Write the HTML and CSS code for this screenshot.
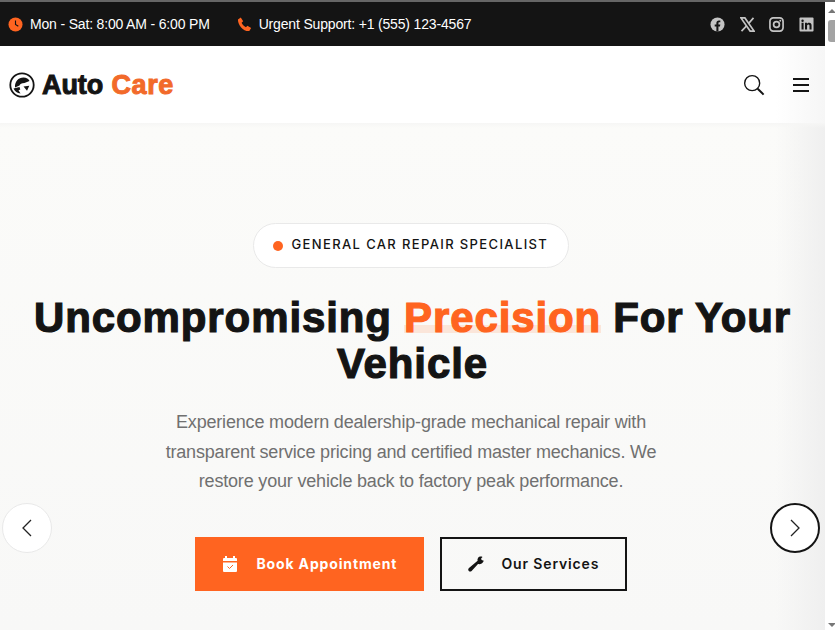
FILE: index.html
```html
<!DOCTYPE html>
<html lang="en">
<head>
    <meta charset="UTF-8">
    <meta name="viewport" content="width=device-width, initial-scale=1.0">
    <title>Auto Care</title>
    <link rel="stylesheet" href="styles.css">
</head>
<body>
    <div class="window">
        <div class="page">
            <div class="topbar">
                <div class="topbar-info">
                    <span class="info-item">
                        <svg class="info-icon" viewBox="0 0 16 16"><circle cx="8" cy="8" r="7.5" fill="#ff6420"/><path d="M8 3.600V8l3 1.800" fill="none" stroke="#141414" stroke-width="1.200"/></svg>
                        Mon - Sat: 8:00 AM - 6:00 PM
                    </span>
                    <span class="info-item">
                        <svg class="info-icon" viewBox="0 0 16 16"><path d="M1 2.600 4 .6l2.600 4-1.700 1.500c.8 2 2.400 3.700 4.600 4.700l1.600-1.600 4 2.600-2 3.200C7 15.600 1 9 1 2.600z" fill="#ff6420"/></svg>
                        Urgent Support: +1 (555) 123-4567
                    </span>
                </div>
                <div class="socials">
                    <svg class="social" viewBox="0 0 16 16"><circle cx="8" cy="8" r="7.500" fill="#c4c4c4"/><path d="M6.800 15.500V10H5V8h1.800V6.500C6.800 4.700 7.900 3.700 9.500 3.700l1.500.1v1.800h-1C9.200 5.600 9 6 9 6.700V8h2l-.4 2H9v5.500z" fill="#141414"/></svg>
                    <svg class="social" viewBox="0 0 16 16"><path d="M1 1h4.200l9.800 14h-4.200z" fill="none" stroke="#c4c4c4" stroke-width="1.800"/><path d="M14.400 1 9 7M7 9.500 1.600 15" stroke="#c4c4c4" stroke-width="1.800" fill="none"/></svg>
                    <svg class="social" viewBox="0 0 16 16"><rect x="1" y="1" width="14" height="14" rx="3.500" fill="none" stroke="#c4c4c4" stroke-width="1.800"/><circle cx="8" cy="8" r="3.100" fill="none" stroke="#c4c4c4" stroke-width="1.800"/><circle cx="12" cy="4" r="1" fill="#c4c4c4"/></svg>
                    <svg class="social" viewBox="0 0 16 16"><rect x=".5" y=".5" width="15" height="15" rx="1" fill="#c4c4c4"/><path d="M2.700 6.200h2.200v7H2.700zM3.800 2.700a1.300 1.300 0 1 1 0 2.600 1.300 1.300 0 0 1 0-2.600zM6.400 6.200h2.100v1c.4-.7 1.200-1.200 2.300-1.200 2.200 0 2.600 1.400 2.600 3.300v3.900h-2.200V9.700c0-.9-.1-1.800-1.200-1.800s-1.400.9-1.400 1.800v3.500H6.400z" fill="#141414"/></svg>
                </div>
            </div>

            <header class="navbar">
                <div class="logo">
                    <svg class="logo-mark" viewBox="0 0 26 26">
                        <circle cx="13" cy="13" r="11.700" fill="#fff" stroke="#141414" stroke-width="1.800"/>
                        <path d="M6 15.500C5.500 9.500 9.500 5.500 14.500 5.500c3 0 5 1.500 6 3.500l-5 2c-3 0-4.500 1.200-5 2.500z" fill="#141414"/>
                        <path d="M4.500 16.500 10.500 15l.8 2.500-1.800.8 2 3.200c-3.200-.2-5.700-2.200-7-5z" fill="#141414"/>
                        <path d="m14.500 14.500 5.800-.8-2.300 5z" fill="#141414"/>
                    </svg>
                    <span class="logo-text">Auto <em>Care</em></span>
                </div>
                <div class="nav-actions">
                    <svg class="search-icon" viewBox="0 0 24 24"><circle cx="10" cy="10" r="8.200" fill="none" stroke="#141414" stroke-width="1.500"/><path d="m16 16 6.500 6.500" stroke="#141414" stroke-width="2.200"/></svg>
                    <div class="burger"><i></i><i></i><i></i></div>
                </div>
            </header>

            <section class="hero">
                <div class="badge"><span class="dot"></span><span class="badge-text">GENERAL CAR REPAIR SPECIALIST</span></div>
                <h1>Uncompromising <span class="accent">Precision</span> For Your<br>Vehicle</h1>
                <p>Experience modern dealership-grade mechanical repair with transparent service pricing and certified master mechanics. We restore your vehicle back to factory peak performance.</p>
                <div class="hero-buttons">
                    <a class="btn btn-primary">
                        <svg class="btn-icon" viewBox="0 0 16 16"><path d="M3 0h2v2h6V0h2v2h1a1 1 0 0 1 1 1v2H1V3a1 1 0 0 1 1-1h1zM1 6.500h14V15a1 1 0 0 1-1 1H2a1 1 0 0 1-1-1z" fill="#fff"/><path d="m5.500 10.500 2 2 3.500-3.500" fill="none" stroke="#ff6420" stroke-width="1"/></svg>
                        Book Appointment
                    </a>
                    <a class="btn btn-outline">
                        <svg class="btn-icon" viewBox="0 0 16 16"><path d="M15.800 4.800 13.600 4l-.5-1.500L14.500 1C13 .2 11 .6 10 2c-.6.900-.7 1.900-.4 2.800L1 12c-1 .9-1 2.200-.2 3s1.900.8 2.800 0L10 8c1 .3 2.600.2 3.700-.5.900-.6 1.700-1.600 2.100-2.700z" fill="#141414"/></svg>
                        Our Services
                    </a>
                </div>
                <button class="arrow arrow-prev"><svg viewBox="0 0 16 20"><path d="M12 2 4 10l8 8" fill="none" stroke="#222" stroke-width="1.300"/></svg></button>
                <button class="arrow arrow-next"><svg viewBox="0 0 16 20"><path d="m4 2 8 8-8 8" fill="none" stroke="#222" stroke-width="1.300"/></svg></button>
            </section>
        </div>
        <div class="scrollbar">
            <span class="scroll-up"></span>
            <span class="scroll-thumb"></span>
            <span class="scroll-down"></span>
        </div>
    </div>
</body>
</html>
```

FILE: styles.css
```css
* {
    margin: 0;
    padding: 0;
    box-sizing: border-box;
}

html, body {
    height: 100%;
    overflow: hidden;
}

body {
    font-family: 'Liberation Sans', Arial, sans-serif;
    color: #141414;
    background: #fff;
}

.window {
    display: flex;
    height: 630px;
    border-top: 2px solid #666;
}

.page {
    flex: 1;
    min-width: 0;
    display: flex;
    flex-direction: column;
}

/* Top bar */
.topbar {
    height: 44px;
    background: #141414;
    color: #fff;
    display: flex;
    align-items: center;
    justify-content: space-between;
    padding: 0 11px 0 8px;
    font-size: 14px;
    letter-spacing: -0.17px;
}

.topbar-info {
    display: flex;
    gap: 27px;
}

.info-item {
    display: flex;
    align-items: center;
    gap: 7px;
}

.info-icon {
    width: 15px;
    height: 15px;
}

.socials {
    display: flex;
    gap: 14.600px;
}

.social {
    width: 15px;
    height: 15px;
}

/* Navbar */
.navbar {
    height: 77px;
    background: linear-gradient(90deg, #fff 94%, #f6f6f6 100%);
    display: flex;
    align-items: center;
    justify-content: space-between;
    padding: 0 16px 0 9px;
}

.logo {
    display: flex;
    align-items: center;
    gap: 7px;
}

.logo-mark {
    width: 26px;
    height: 26px;
}

.logo-text {
    font-size: 27px;
    font-weight: 700;
    letter-spacing: -0.1px;
    padding-top: 2px;
    -webkit-text-stroke: 1px currentColor;
}

.logo-text em {
    font-style: normal;
    color: #f26a2a;
    letter-spacing: 0.6px;
    margin-left: 1px;
}

.nav-actions {
    display: flex;
    align-items: center;
    gap: 28px;
}

.search-icon {
    width: 22px;
    height: 22px;
}

.burger {
    display: flex;
    flex-direction: column;
    gap: 4px;
    width: 16px;
}

.burger i {
    display: block;
    height: 2px;
    background: #141414;
}

/* Hero */
.hero {
    flex: 1;
    position: relative;
    background: linear-gradient(180deg, #f6f6f5 0, transparent 5px), linear-gradient(90deg, transparent 94%, #efefef 100%), linear-gradient(180deg, #fbfbf9 0%, #f8f8f7 100%);
    display: flex;
    flex-direction: column;
    align-items: center;
    padding-top: 100px;
    text-align: center;
}

.badge {
    height: 45px;
    width: 316px;
    margin-right: 4px;
    padding-left: 19px;
    display: flex;
    align-items: center;
    gap: 9px;
    background: #fff;
    border: 1px solid #e9e9e9;
    border-radius: 23px;
    font-family: 'Inter', sans-serif;
    font-size: 13px;
    font-weight: 500;
    letter-spacing: 1.370px;
    white-space: nowrap;
}

.badge-text {
    margin-bottom: 3px;
}

.dot {
    width: 10px;
    height: 10px;
    border-radius: 50%;
    background: #ff6420;
}

h1 {
    margin-top: 27px;
    font-size: 42px;
    line-height: 46px;
    font-weight: 700;
    letter-spacing: 0.9px;
    word-spacing: -0.500px;
    -webkit-text-stroke: 1.200px currentColor;
}

.accent {
    color: #ff6420;
    background: linear-gradient(transparent 67%, #fbe6da 67%, #fbe6da 83%, transparent 83%);
}

.hero p {
    margin-top: 21px;
    margin-right: 3px;
    width: 510px;
    font-size: 18px;
    line-height: 29.500px;
    letter-spacing: -0.18px;
    color: #707070;
}

.hero-buttons {
    margin-top: 40px;
    margin-right: 4px;
    display: flex;
    gap: 16px;
}

.btn {
    height: 54px;
    display: flex;
    align-items: center;
    font-family: 'Inter', sans-serif;
    font-size: 14px;
    font-weight: 600;
}

.btn-primary {
    width: 229px;
    padding-left: 27px;
    gap: 19px;
    background: #ff6420;
    color: #fff;
    font-weight: 700;
    letter-spacing: 0.850px;
}

.btn-outline {
    width: 187px;
    padding-left: 26px;
    gap: 18px;
    border: 2px solid #141414;
    letter-spacing: 0.850px;
}

.btn-icon {
    width: 16px;
    height: 16px;
}

.arrow {
    position: absolute;
    top: 380px;
    width: 50px;
    height: 50px;
    border-radius: 50%;
    background: #fff;
    display: flex;
    align-items: center;
    justify-content: center;
    border: 1px solid #e9e9e9;
}

.arrow svg {
    width: 16px;
    height: 20px;
}

.arrow-prev {
    left: 2px;
}

.arrow-next {
    right: 5px;
    border: 2px solid #141414;
}

/* Window scrollbar */
.scrollbar {
    width: 10px;
    background: #fff;
    position: relative;
}

.scroll-thumb {
    position: absolute;
    top: 18px;
    left: 3px;
    width: 7px;
    height: 22px;
    background: #a3a3a3;
    border-radius: 3px 0 0 3px;
}

.scroll-up, .scroll-down {
    position: absolute;
    left: 3px;
    width: 0;
    height: 0;
    border-left: 4px solid transparent;
    border-right: 4px solid transparent;
}

.scroll-up {
    top: 7px;
    border-bottom: 4px solid #777;
}

.scroll-down {
    bottom: 3px;
    border-top: 4px solid #777;
}
```
